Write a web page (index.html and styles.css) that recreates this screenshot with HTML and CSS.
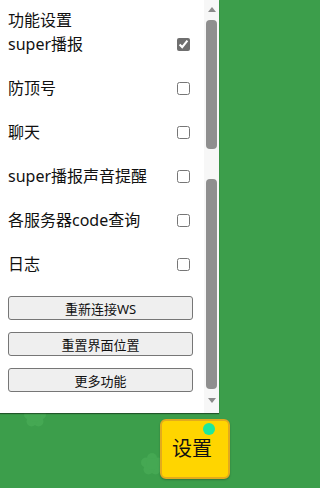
FILE: index.html
```html
<!DOCTYPE html>
<html lang="zh">
<head>
<meta charset="utf-8">
<title>功能设置</title>
<link rel="stylesheet" href="styles.css">
</head>
<body>
<svg class="flower flower-a" width="24" height="24" viewBox="0 0 24 24"><g fill="#45a853"><circle cx="12" cy="6" r="5"/><circle cx="18" cy="10.5" r="5"/><circle cx="15.5" cy="17.5" r="5"/><circle cx="8.5" cy="17.5" r="5"/><circle cx="6" cy="10.5" r="5"/><circle cx="12" cy="12" r="6"/></g></svg>
<svg class="flower flower-b" width="24" height="24" viewBox="0 0 24 24"><g fill="#45a853"><circle cx="12" cy="6" r="5"/><circle cx="18" cy="10.5" r="5"/><circle cx="15.5" cy="17.5" r="5"/><circle cx="8.5" cy="17.5" r="5"/><circle cx="6" cy="10.5" r="5"/><circle cx="12" cy="12" r="6"/></g></svg>

<div class="panel">
  <div class="content">
    <div class="title">功能设置</div>
    <label class="row"><span>super播报</span><input type="checkbox" checked></label>
    <label class="row"><span>防顶号</span><input type="checkbox"></label>
    <label class="row"><span>聊天</span><input type="checkbox"></label>
    <label class="row"><span>super播报声音提醒</span><input type="checkbox"></label>
    <label class="row"><span>各服务器code查询</span><input type="checkbox"></label>
    <label class="row"><span>日志</span><input type="checkbox"></label>
    <div class="buttons">
      <button class="btn">重新连接WS</button>
      <button class="btn">重置界面位置</button>
      <button class="btn">更多功能</button>
    </div>
  </div>
  <div class="scrollbar">
    <div class="arrow-up"></div>
    <div class="thumb thumb-1"></div>
    <div class="thumb thumb-2"></div>
    <div class="arrow-down"></div>
  </div>
</div>

<div class="settings-btn">设置<span class="dot"></span></div>
</body>
</html>
```
FILE: styles.css
```css
html, body {
  margin: 0;
  padding: 0;
}
body {
  min-height: 488px;
  background: #3c9e4b;
  font-family: "Noto Sans", "Noto Sans CJK SC", sans-serif;
  color: #111;
  position: relative;
}
.flower {
  position: absolute;
}
.flower-a { left: 23px; top: 404px; }
.flower-b { left: 140px; top: 452px; }

.panel {
  position: relative;
  z-index: 1;
  display: flex;
  width: 219px;
  height: 413px;
  background: #fff;
  box-shadow: 0 1px 1px rgba(0,0,0,0.45);
}
.content {
  width: 185px;
  padding: 8px 11px 0 8px;
}
.title {
  height: 24px;
  line-height: 24px;
  font-size: 16px;
}
.row {
  display: flex;
  align-items: center;
  justify-content: space-between;
  height: 24px;
  margin-bottom: 20px;
  font-size: 16px;
  line-height: 24px;
}
.row input {
  width: 13px;
  height: 13px;
  margin: 3px 3px 3px 4px;
  accent-color: #6f6f6f;
}
.buttons {
  display: flex;
  flex-direction: column;
  gap: 12px;
}
.btn {
  display: block;
  width: 185px;
  height: 24px;
  margin: 0;
  padding: 0;
  border: 1px solid #767676;
  border-radius: 3px;
  background: #efefef;
  font-family: "Noto Sans", "Noto Sans CJK SC", sans-serif;
  font-size: 13px;
  color: #111;
}
.scrollbar {
  width: 15px;
  background: #f7f7f7;
  display: flex;
  flex-direction: column;
  align-items: center;
}
.arrow-up {
  margin-top: 7px;
  width: 0;
  height: 0;
  border-left: 4px solid transparent;
  border-right: 4px solid transparent;
  border-bottom: 5px solid #8a8a8a;
}
.thumb {
  width: 11px;
  background: #8f8f8f;
  border-radius: 4px;
}
.thumb-1 {
  margin-top: 8px;
  height: 129px;
}
.thumb-2 {
  margin-top: 30px;
  height: 210px;
}
.arrow-down {
  margin-top: 9px;
  width: 0;
  height: 0;
  border-left: 4px solid transparent;
  border-right: 4px solid transparent;
  border-top: 5px solid #8a8a8a;
}

.settings-btn {
  position: absolute;
  z-index: 2;
  left: 160px;
  top: 419px;
  width: 70px;
  height: 60px;
  box-sizing: border-box;
  border: 2px solid #e3ab1c;
  border-radius: 6px;
  background: #ffd500;
  font-size: 20px;
  line-height: 56px;
  padding-left: 10px;
  color: #111;
  box-shadow: 0 1px 2px rgba(0,0,0,0.25);
}
.dot {
  position: absolute;
  left: 41px;
  top: 2px;
  width: 12px;
  height: 12px;
  border-radius: 50%;
  background: #1fe79c;
}
```
